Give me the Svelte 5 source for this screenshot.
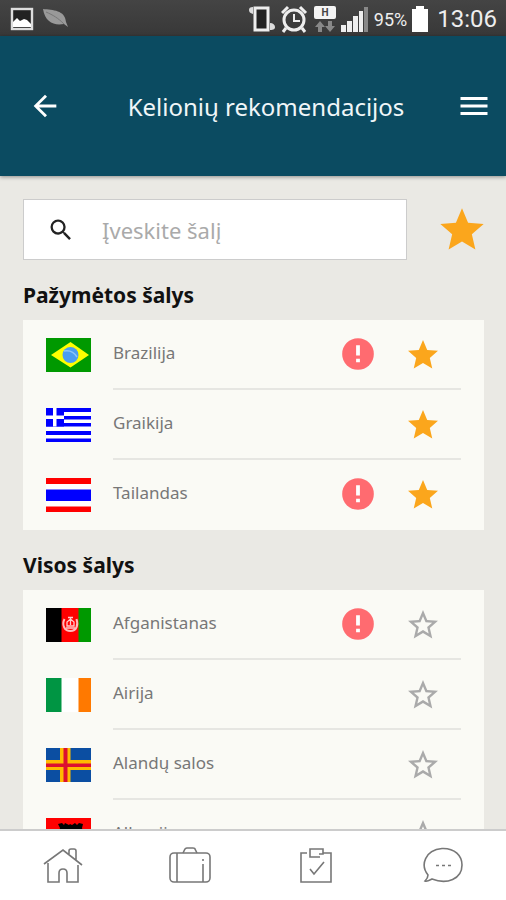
<script>
	let search = '';
	let onlyMarked = false;

	let marked = [
		{ name: 'Brazilija', flag: 'br', warning: true, starred: true },
		{ name: 'Graikija', flag: 'gr', warning: false, starred: true },
		{ name: 'Tailandas', flag: 'th', warning: true, starred: true }
	];
	let all = [
		{ name: 'Afganistanas', flag: 'af', warning: true, starred: false },
		{ name: 'Airija', flag: 'ie', warning: false, starred: false },
		{ name: 'Alandų salos', flag: 'ax', warning: false, starred: false },
		{ name: 'Albanija', flag: 'al', warning: false, starred: false }
	];

	$: sections = [
		{ title: 'Pažymėtos šalys', countries: match(marked, search) },
		{ title: 'Visos šalys', countries: onlyMarked ? [] : match(all, search) }
	];

	function match(list, text) {
		return list.filter((c) => c.name.toLowerCase().includes(text.toLowerCase()));
	}

	function toggle(country) {
		country.starred = !country.starred;
		marked = [...marked];
		all = [...all];
	}
</script>

<div class="app">
	<div class="status">
		<svg class="picture" width="24" height="24" viewBox="0 0 24 24">
			<rect x="2" y="2" width="20" height="20" fill="#222" stroke="#ddd" stroke-width="2.4" />
			<path d="M3 20v-5l4-4 3 3 2-1 2-1 3 1 4 4v3z" fill="#fff" />
		</svg>
		<svg class="leaf" width="27" height="22" viewBox="0 0 27 22">
			<path d="M1 1c10 1 22 1 23 13l2 5-4-3C12 18 3 14 1 1z" fill="#999" />
			<path d="M4 4c7 3 12 6 18 12" fill="none" stroke="#777" />
		</svg>
		<svg class="end" width="28" height="28" viewBox="0 0 28 28">
			<rect x="6" y="3" width="13" height="22" fill="#222" stroke="#eee" stroke-width="3" />
			<path d="M4 2C1 2 0 3 0 5s1 3 4 4M21 18c3 0 5 2 5 4s-1 3-5 3" fill="#ddd" />
		</svg>
		<svg width="28" height="28" viewBox="0 0 28 28" fill="none" stroke="#eee">
			<circle cx="13" cy="15" r="10" stroke-width="3" />
			<path d="M13 9v7h6" stroke-width="2" />
			<path d="M1 8l6-6M19 2l6 6M5 23l-3 4M21 23l3 4" stroke-width="3" />
		</svg>
		<svg width="24" height="28" viewBox="0 0 24 28">
			<rect x="1" y="1" width="22" height="13" rx="2" fill="#f4f4f4" />
			<text x="12" y="11" text-anchor="middle" class="network">H</text>
			<path d="M7 16l5 6H9v5H5v-5H2zM17 27l-5-6h3v-5h4v5h3z" fill="#888" />
		</svg>
		<svg width="29" height="28" viewBox="0 0 29 28">
			<path d="M0 20h5v7H0zM6 16h5v11H6zM12 11h5v16h-5zM18 6h4v21h-4z" fill="#eee" />
			<path d="M23 2h4v25h-4z" fill="#888" />
		</svg>
		<span class="percent">95%</span>
		<svg width="18" height="28" viewBox="0 0 18 28">
			<path d="M5 1h8v3h4v23H1V4h4z" fill="#fff" />
		</svg>
		<span class="clock">13:06</span>
	</div>

	<header>
		<button class="back" aria-label="Atgal">
			<svg width="34" height="34" viewBox="0 0 24 24" fill="#fff">
				<path d="M20 11H7.830l5.590-5.590L12 4l-8 8 8 8 1.410-1.410L7.830 13H20v-2z" />
			</svg>
		</button>
		<h1>Kelionių rekomendacijos</h1>
		<button class="menu" aria-label="Meniu">
			<svg width="36" height="36" viewBox="0 0 24 24" fill="#fff">
				<path d="M3 18h18v-2H3v2zm0-5h18v-2H3v2zm0-7v2h18V6H3z" />
			</svg>
		</button>
	</header>

	<main>
		<div class="search">
			<label>
				<svg width="28" height="28" viewBox="0 0 24 24" fill="#222">
					<path d="M15.500 14h-.790l-.280-.270A6.471 6.471 0 0 0 16 9.500 6.500 6.500 0 1 0 9.500 16c1.610 0 3.090-.590 4.230-1.570l.270.280v.790l5 4.990L20.490 19l-4.990-5zm-6 0C7.010 14 5 11.990 5 9.500S7.010 5 9.500 5 14 7.010 14 9.500 11.990 14 9.500 14z" />
				</svg>
				<input type="text" aria-label="Šalis" placeholder="Įveskite šalį" bind:value={search} />
			</label>
			<button aria-label="Tik pažymėtos" aria-pressed={onlyMarked} on:click={() => { onlyMarked = !onlyMarked }}>
				<svg width="52" height="52" viewBox="0 0 24 24" fill="#fba61c">
					<path d="M12 17.270L18.180 21l-1.640-7.030L22 9.240l-7.190-.610L12 2 9.190 8.630 2 9.240l5.460 4.730L5.820 21z" />
				</svg>
			</button>
		</div>

		{#each sections as section}
			<section>
				<h2>{section.title}</h2>
				<ul>
					{#each section.countries as country}
						<li>
							<svg class="flag" width="45" height="34" viewBox="0 0 45 34" aria-hidden="true">
								{#if country.flag == 'br'}
									<rect width="45" height="34" fill="#090" />
									<path d="M5 17L24.500 4 43 17 24.500 29.500z" fill="#ff0" />
									<circle cx="24.500" cy="17" r="8" fill="#4a9df0" />
									<path d="M18 13c5-1 10 1 13 6" fill="none" stroke="#8cc6f8" stroke-width="1.500" />
								{:else if country.flag == 'gr'}
									<rect width="45" height="34" fill="#fff" />
									<path d="M0 0h45v4H0zM18 8h27v3.500H18zM0 15h45v3.500H0zM0 23h45v4H0zM0 30.500h45V34H0z" fill="#00f" />
									<rect width="18" height="18.500" fill="#00f" />
									<path d="M7 0h3.500v18.500H7zM0 7.500h18V11H0z" fill="#fff" />
								{:else if country.flag == 'th'}
									<rect width="45" height="34" fill="#fff" />
									<path d="M0 0h45v6H0zM0 28.500h45V34H0z" fill="#f00" />
									<rect y="11.500" width="45" height="11.500" fill="#00f" />
								{:else if country.flag == 'af'}
									<rect width="45" height="34" fill="#f00" />
									<rect width="15.500" height="34" />
									<rect x="32.500" width="12.500" height="34" fill="#090" />
									<path d="M18.500 11c-3 6 0 12 6 12s8-6 6-12" fill="none" stroke="#fbb" stroke-width="2" />
									<path d="M20 20h9M21 18v-4l3.500-3 3.500 3v4zM24.500 9v8M22 9.500h5" fill="none" stroke="#fcc" stroke-width="1.300" />
								{:else if country.flag == 'ie'}
									<rect width="45" height="34" fill="#fff" />
									<rect width="15.500" height="34" fill="#009543" />
									<rect x="32.500" width="12.500" height="34" fill="#ff7900" />
								{:else if country.flag == 'ax'}
									<rect width="45" height="34" fill="#0b4ea2" />
									<path d="M14 0h10.500v34H14zM0 12h45v10H0z" fill="#fb0" />
									<path d="M17.500 0h4v34h-4zM0 15.500h45v3.500H0z" fill="#dc1030" />
								{:else if country.flag == 'al'}
									<rect width="45" height="34" fill="#f00" />
									<path d="M12 6l4-1 2 2 1-2 4 2 1-1 2 1 3-2 2 2 2-2 4 1-1 4 1 3-3 1 1 4-4 2-2 5-2 5-3 1-3-6-2-5-4-2 1-4-3-1 1-3z" />
								{/if}
							</svg>
							<div class="row">
								<span class="name">{country.name}</span>
								{#if country.warning}
									<svg class="warning" width="38" height="38" viewBox="0 0 24 24" role="img" aria-label="Įspėjimas">
										<circle cx="12" cy="12" r="10" fill="#ff6b70" />
										<path d="M10.800 6.500h2.400v6.500h-2.400zM10.800 15h2.400v2.200h-2.400z" fill="#fff" />
									</svg>
								{/if}
								<button class="star" aria-label="Pažymėti: {country.name}" aria-pressed={country.starred} on:click={() => toggle(country)}>
									<svg width="36" height="36" viewBox="0 0 24 24" fill={country.starred ? '#fba61c' : '#aaa'}>
										{#if country.starred}
											<path d="M12 17.270L18.180 21l-1.640-7.030L22 9.240l-7.190-.610L12 2 9.190 8.630 2 9.240l5.460 4.730L5.820 21z" />
										{:else}
											<path d="M22 9.240l-7.190-.620L12 2 9.190 8.630 2 9.240l5.460 4.730L5.820 21 12 17.270 18.180 21l-1.630-7.030L22 9.240zM12 15.400l-3.760 2.270 1-4.280-3.320-2.880 4.380-.380L12 6.100l1.710 4.040 4.380.380-3.320 2.880 1 4.280L12 15.400z" />
										{/if}
									</svg>
								</button>
							</div>
						</li>
					{/each}
				</ul>
			</section>
		{/each}
	</main>

	<nav>
		<a href="#home" aria-label="Pradžia">
			<svg width="40" height="38" viewBox="0 0 40 38">
				<path d="M1 17L20 3l19 15M26 7V4q0-2 2-2h3q2 0 2 2v9M5 16v19h11V26q0-4 4-4t4 4v9h11V18" />
			</svg>
		</a>
		<a href="#trips" aria-label="Kelionės">
			<svg width="42" height="38" viewBox="0 0 42 38">
				<rect x="1" y="6" width="40" height="29" rx="4" />
				<path d="M14 6l2-4q1-1 2-1h6q2 0 2 1l2 4M8 6v29M34 17v18M34 12v2" />
			</svg>
		</a>
		<a href="#tasks" aria-label="Sąrašas">
			<svg width="32" height="38" viewBox="0 0 32 38">
				<path d="M7 6H1v29h30V6h-8M20 10H10V2h13v5h-4M10 22l4 5 10-12" />
			</svg>
		</a>
		<a href="#chat" aria-label="Pokalbiai">
			<svg width="42" height="38" viewBox="0 0 42 38">
				<path d="M6 28C-2 18 3 3 20 1.500 33 1 40 9 40 18c0 14-15 20-30 14-2 1-5 3-7 2 2-2 3-4 3-6z" />
				<path d="M14 18.500h3M20 18.500h3M26 18.500h3" />
			</svg>
		</a>
	</nav>
</div>

<style>
	:global(body) {
		margin: 0;
	}

	.app {
		display: flex;
		flex-direction: column;
		height: 100vh;
		background-color: #eae9e4;
		font-family: "Noto Sans", sans-serif;
	}

	svg {
		display: block;
		flex-shrink: 0;
	}

	button {
		flex-shrink: 0;
		padding: 0;
		border: none;
		background: none;
		cursor: pointer;
	}

	.status {
		display: flex;
		align-items: center;
		gap: 4px;
		height: 36px;
		padding: 2px 9px 0 10px;
		box-sizing: border-box;
		background: linear-gradient(#444, #383838);
		color: #eee;
		font-family: Roboto, sans-serif;
	}

	.leaf {
		margin-left: 4px;
	}

	.end {
		margin-left: auto;
	}

	.network {
		font-size: 10px;
		font-weight: bold;
		fill: #444;
	}

	.percent {
		font-size: 18px;
	}

	.clock {
		font-size: 24px;
		margin-left: 4px;
	}

	header {
		display: flex;
		align-items: center;
		height: 140px;
		padding: 0 14px 0 28px;
		background-color: #0b4b61;
		box-shadow: 0 1px 4px rgba(0, 0, 0, 0.4);
		z-index: 1;
	}

	h1 {
		flex-grow: 1;
		margin: 0;
		padding-left: 14px;
		color: #f0f6f8;
		font-size: 24px;
		font-weight: normal;
		text-align: center;
	}

	main {
		flex: 1;
		min-height: 0;
		overflow: hidden;
		padding: 23px 22px 0 23px;
	}

	.search {
		display: flex;
		align-items: center;
		justify-content: space-between;
		gap: 29px;
		margin-right: -4px;
	}

	label {
		display: flex;
		flex: 1;
		min-width: 0;
		align-items: center;
		gap: 25px;
		height: 59px;
		padding-left: 23px;
		border: 1px solid #ccc;
		background-color: #fff;
	}

	input {
		flex: 1;
		min-width: 0;
		border: none;
		outline: none;
		background: none;
		font-family: inherit;
		font-size: 22px;
		color: #333;
	}

	input::placeholder {
		color: #aaa;
	}

	h2 {
		margin: 0;
		height: 60px;
		line-height: 70px;
		font-size: 21px;
		color: #111;
	}

	ul {
		margin: 0;
		padding: 0 23px;
		list-style: none;
		background-color: #fafaf5;
	}

	li {
		display: flex;
		align-items: center;
		gap: 22px;
		height: 70px;
	}

	.row {
		display: flex;
		flex: 1;
		align-items: center;
		height: 100%;
		padding-right: 20px;
		box-sizing: border-box;
		border-bottom: 2px solid #e6e6e2;
	}

	li:last-child .row {
		border-color: transparent;
	}

	.name {
		flex: 1;
		padding-bottom: 4px;
		font-size: 17px;
		color: #777;
	}

	.warning {
		margin-right: 28px;
	}

	.star {
		padding-top: 2px;
	}

	nav {
		display: flex;
		height: 69px;
		border-top: 2px solid #ccc;
		background-color: #fff;
	}

	nav a {
		display: flex;
		flex: 1;
		align-items: center;
		justify-content: center;
	}

	nav svg {
		fill: none;
		stroke: #777;
		stroke-width: 1.6;
	}
</style>
